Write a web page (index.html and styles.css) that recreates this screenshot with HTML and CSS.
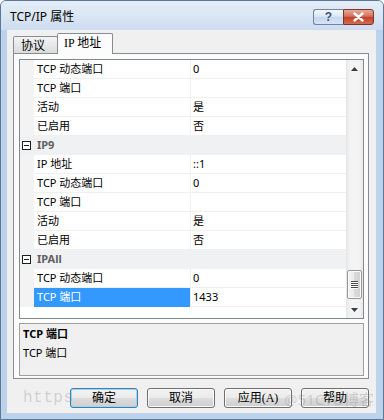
FILE: index.html
```html
<!DOCTYPE html>
<html lang="zh-CN">
<head>
<meta charset="utf-8">
<title>TCP/IP 属性</title>
<link rel="stylesheet" href="styles.css">
</head>
<body>
<div class="window">
  <div class="titlebar">
    <span class="title">TCP/IP 属性</span>
    <div class="caption">
      <div class="cap-btn help">?</div>
      <div class="cap-btn close">
        <svg width="13" height="10" viewBox="0 0 13 10"><path d="M2.5 1.5 L10.5 8.5 M10.5 1.5 L2.5 8.5" stroke="#fff" stroke-width="2.4" stroke-linecap="round"/></svg>
      </div>
    </div>
  </div>
  <div class="frame">
    <div class="client">
      <div class="tabs">
        <div class="tab">协议</div>
        <div class="tab active">IP 地址</div>
      </div>
      <div class="panel">
        <div class="grid">
          <div class="rows">
            <div class="row"><div class="gut"></div><div class="name">TCP 动态端口</div><div class="val">0</div></div>
            <div class="row"><div class="gut"></div><div class="name">TCP 端口</div><div class="val"></div></div>
            <div class="row"><div class="gut"></div><div class="name">活动</div><div class="val">是</div></div>
            <div class="row"><div class="gut"></div><div class="name">已启用</div><div class="val">否</div></div>
            <div class="row cat"><div class="gut"><svg class="minus" width="9" height="9" viewBox="0 0 9 9"><rect x="0.5" y="0.5" width="8" height="8" fill="#fff" stroke="#1e1e1e"/><path d="M2 4.5 H7" stroke="#1e1e1e"/></svg></div><div class="cat-name">IP9</div></div>
            <div class="row"><div class="gut"></div><div class="name">IP 地址</div><div class="val">::1</div></div>
            <div class="row"><div class="gut"></div><div class="name">TCP 动态端口</div><div class="val">0</div></div>
            <div class="row"><div class="gut"></div><div class="name">TCP 端口</div><div class="val"></div></div>
            <div class="row"><div class="gut"></div><div class="name">活动</div><div class="val">是</div></div>
            <div class="row"><div class="gut"></div><div class="name">已启用</div><div class="val">否</div></div>
            <div class="row cat"><div class="gut"><svg class="minus" width="9" height="9" viewBox="0 0 9 9"><rect x="0.5" y="0.5" width="8" height="8" fill="#fff" stroke="#1e1e1e"/><path d="M2 4.5 H7" stroke="#1e1e1e"/></svg></div><div class="cat-name">IPAll</div></div>
            <div class="row"><div class="gut"></div><div class="name">TCP 动态端口</div><div class="val">0</div></div>
            <div class="row selected"><div class="gut"></div><div class="name">TCP 端口</div><div class="val">1433</div></div>
          </div>
          <div class="vscroll">
            <div class="arrow"><svg width="7" height="4" viewBox="0 0 7 4"><path d="M0 4 L3.5 0 L7 4 Z" fill="#3c3c3c"/></svg></div>
            <div class="track">
              <div class="thumb"><svg width="7" height="8" viewBox="0 0 7 8"><path d="M0 0.5 H7 M0 2.5 H7 M0 4.5 H7 M0 6.5 H7" stroke="#4a4a4a"/><path d="M0 1.5 H7 M0 3.5 H7 M0 5.5 H7 M0 7.5 H7" stroke="#ffffff"/></svg></div>
            </div>
            <div class="arrow"><svg width="7" height="4" viewBox="0 0 7 4"><path d="M0 0 L3.5 4 L7 0 Z" fill="#3c3c3c"/></svg></div>
          </div>
        </div>
        <div class="desc">
          <div class="desc-title">TCP 端口</div>
          <div class="desc-text">TCP 端口</div>
        </div>
      </div>
      <div class="buttons">
        <button class="btn default">确定</button>
        <button class="btn">取消</button>
        <button class="btn">应用(A)</button>
        <button class="btn">帮助</button>
        <div class="watermark"><span class="wm-url">https</span><span class="wm-site">@51CTO博客</span></div>
      </div>
    </div>
  </div>
</div>
</body>
</html>
```

FILE: styles.css
```css
* { box-sizing: border-box; }
html, body { margin: 0; padding: 0; }
body {
  width: 384px;
  height: 420px;
  overflow: hidden;
  background: #ffffff;
  font-family: "Noto Sans", "Noto Sans CJK SC", sans-serif;
  font-size: 11px;
  color: #000;
}

.window {
  width: 384px;
  height: 420px;
  border: 1px solid #5d7796;
  border-radius: 6px 6px 0 0;
  display: flex;
  flex-direction: column;
  background: #bcd2eb;
  overflow: hidden;
}

.titlebar {
  height: 29px;
  flex: none;
  display: flex;
  align-items: flex-start;
  padding: 0 9px 0 9px;
  background: linear-gradient(#e5eef8, #d7e4f3 60%, #cddcf0);
}
.title {
  font-size: 12px;
  line-height: 16px;
  margin-top: 8px;
}
.caption {
  margin-left: auto;
  margin-top: 8px;
  display: flex;
}
.cap-btn {
  height: 16px;
  display: flex;
  align-items: center;
  justify-content: center;
  border: 1px solid #6f85a3;
}
.help {
  width: 30px;
  border-right: none;
  border-radius: 3px 0 0 3px;
  background: linear-gradient(#f3f7fc, #dde8f5 45%, #c6d8ee 50%, #d6e4f5);
  color: #3d5677;
  font-family: "Liberation Sans", sans-serif;
  font-size: 12px;
  font-weight: bold;
  line-height: 14px;
}
.close {
  width: 31px;
  border-color: #7a3527;
  border-radius: 0 3px 3px 0;
  background: linear-gradient(#e9a898, #d4705c 45%, #c0432b 52%, #d66a52);
}

.frame {
  flex: 1;
  display: flex;
  padding: 0 7px 6px 6px;
}
.client {
  flex: 1;
  position: relative;
  display: flex;
  flex-direction: column;
  padding-top: 3px;
  background: #f0f0f0;
}

.tabs {
  height: 20px;
  flex: none;
  display: flex;
  align-items: flex-end;
  padding-left: 6px;
}
.tab {
  height: 17px;
  width: 45px;
  border: 1px solid #898c95;
  border-bottom: none;
  border-radius: 2px 2px 0 0;
  background: linear-gradient(#f4f4f4, #e8e8e8 50%, #dcdcdc);
  font-family: "Noto Sans CJK SC", sans-serif;
  font-size: 12px;
  line-height: 16px;
  padding-left: 7px;
}
.tab.active {
  position: relative;
  z-index: 1;
  width: 56px;
  height: 21px;
  margin-left: -1px;
  margin-bottom: -1px;
  background: #fcfcfc;
  font-family: "Liberation Serif", "Noto Sans CJK SC", serif;
  font-size: 12px;
  line-height: 19px;
  padding-left: 6px;
}

.panel {
  width: 356px;
  height: 326px;
  flex: none;
  margin-left: 6px;
  border: 1px solid #898c95;
  background: #fcfcfc;
  padding: 5px 4px 2px 5px;
  display: flex;
  flex-direction: column;
  gap: 4px;
}

.grid {
  height: 260px;
  flex: none;
  border: 1px solid #828790;
  background: #ffffff;
  display: flex;
}
.rows {
  width: 326px;
  flex: none;
  display: flex;
  flex-direction: column;
}
.row {
  height: 19px;
  display: grid;
  grid-template-columns: 14px 156px 1fr;
  line-height: 18px;
  font-family: "Noto Sans", "Noto Sans CJK SC", sans-serif;
  font-size: 11px;
}
.gut {
  background: #f3f3f3;
}
.name {
  padding-left: 3px;
  border-bottom: 1px solid #f0f0f0;
  white-space: nowrap;
}
.val {
  padding-left: 2px;
  border-left: 1px solid #f0f0f0;
  border-bottom: 1px solid #f0f0f0;
}
.row.cat {
  background: #f0f1f3;
}
.row.cat .gut {
  background: #f0f1f3;
  display: flex;
  align-items: center;
  padding-left: 2px;
}
.cat-name {
  grid-column: 2 / 4;
  padding-left: 3px;
  font-weight: bold;
  color: #606060;
}
.row.selected .name {
  background: #3399ff;
  color: #ffffff;
  border-bottom-color: #3399ff;
}

.vscroll {
  flex: 1;
  display: flex;
  flex-direction: column;
  background: linear-gradient(90deg, #e6e6e6, #f4f4f4 25%, #f4f4f4 75%, #e9e9e9);
}
.arrow {
  height: 17px;
  flex: none;
  display: flex;
  align-items: center;
  justify-content: center;
}
.track {
  flex: 1;
  display: flex;
  flex-direction: column;
  justify-content: flex-end;
  padding: 0 1px 2px 1px;
}
.thumb {
  height: 29px;
  border: 1px solid #979797;
  border-radius: 2px;
  background: linear-gradient(90deg, #f4f4f4, #e9e9e9 50%, #dadada 50%, #d2d2d2);
  box-shadow: inset 0 0 0 1px #fbfbfb;
  display: flex;
  align-items: center;
  justify-content: center;
}

.desc {
  height: 53px;
  flex: none;
  border: 1px solid #a0a0a0;
  background: #f0f0f0;
  padding-left: 3px;
  font-size: 11px;
  line-height: 19px;
}
.desc-title {
  font-weight: bold;
}

.buttons {
  position: relative;
  height: 20px;
  flex: none;
  margin-top: 9px;
  padding-right: 7px;
  display: flex;
  justify-content: flex-end;
  gap: 9px;
}
.btn {
  width: 68px;
  height: 20px;
  padding: 0;
  border: 1px solid #707070;
  border-radius: 3px;
  background: linear-gradient(#f2f2f2, #ebebeb 50%, #dddddd 50%, #cfcfcf);
  box-shadow: inset 0 0 0 1px #fafafa;
  font-family: "Liberation Serif", "Noto Sans CJK SC", serif;
  font-size: 12px;
  line-height: 16px;
  color: #000;
}
.btn.default {
  border-color: #3c7fb1;
  box-shadow: inset 0 0 0 1px #9fd6f7;
}

.watermark {
  position: absolute;
  left: 16px;
  right: 2px;
  top: -2px;
  height: 24px;
  display: flex;
  align-items: center;
  justify-content: space-between;
  pointer-events: none;
  color: rgba(120, 120, 120, 0.28);
}
.wm-url {
  font-family: "Liberation Mono", monospace;
  font-size: 16px;
  letter-spacing: 0.5px;
}
.wm-site {
  font-family: "Noto Sans", "Noto Sans CJK SC", sans-serif;
  font-size: 15px;
}
```
